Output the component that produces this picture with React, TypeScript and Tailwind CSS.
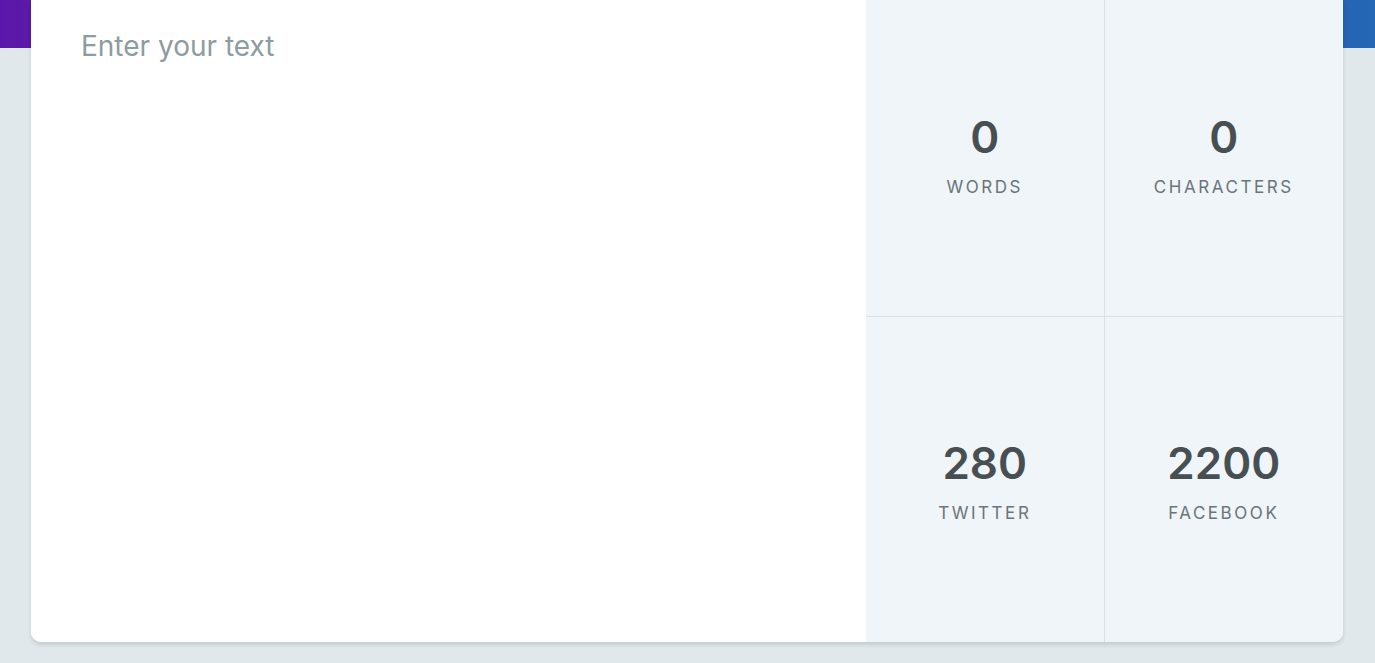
import { useState } from 'react'

const LIMITS = { twitter: 280, facebook: 2200 }

function Stat({ value, label, className }: { value: number; label: string; className?: string }) {
  return (
    <div className={`flex flex-col items-center justify-center ${className ?? ''}`}>
      <div className="text-[44px] leading-none font-semibold text-[#484f53]">{value}</div>
      <div className="mt-[20px] text-[17px] leading-none tracking-[0.15em] text-[#6b7478]">{label}</div>
    </div>
  )
}

export default function App() {
  const [text, setText] = useState('')
  const words = text.trim() ? text.trim().split(/\s+/).length : 0
  const chars = text.length

  return (
    <div className="min-h-screen bg-[#e1e8eb] font-['Inter','Noto_Sans',sans-serif]">
      <div className="h-[48px] bg-gradient-to-r from-[#5b17a9] via-[#3f3fae] to-[#2467b4]" />
      <div className="pl-[31px] pr-[32px] -mt-[48px] relative pb-[21px]">
        <div className="flex h-[642px] rounded-b-[10px] overflow-hidden bg-white shadow-[0_3px_4px_rgba(0,0,0,0.12)]">
          <textarea
            value={text}
            onChange={e => setText(e.target.value)}
            placeholder="Enter your text"
            className="flex-1 resize-none outline-none bg-white px-[50px] pt-[28px] text-[28px] leading-[36px] text-[#444] placeholder:text-[#8d9ca2]"
          />
          <div className="w-[477px] bg-[#eff5f8] grid grid-cols-2 grid-rows-[317px_1fr]">
            <Stat value={words} label="WORDS" className="border-r border-b border-[#dbe2e6] pb-[6px]" />
            <Stat value={chars} label="CHARACTERS" className="border-b border-[#dbe2e6] pb-[6px]" />
            <Stat value={LIMITS.twitter - chars} label="TWITTER" className="border-r border-[#dbe2e6] pt-[4px]" />
            <Stat value={LIMITS.facebook - chars} label="FACEBOOK" className="pt-[4px]" />
          </div>
        </div>
      </div>
    </div>
  )
}
